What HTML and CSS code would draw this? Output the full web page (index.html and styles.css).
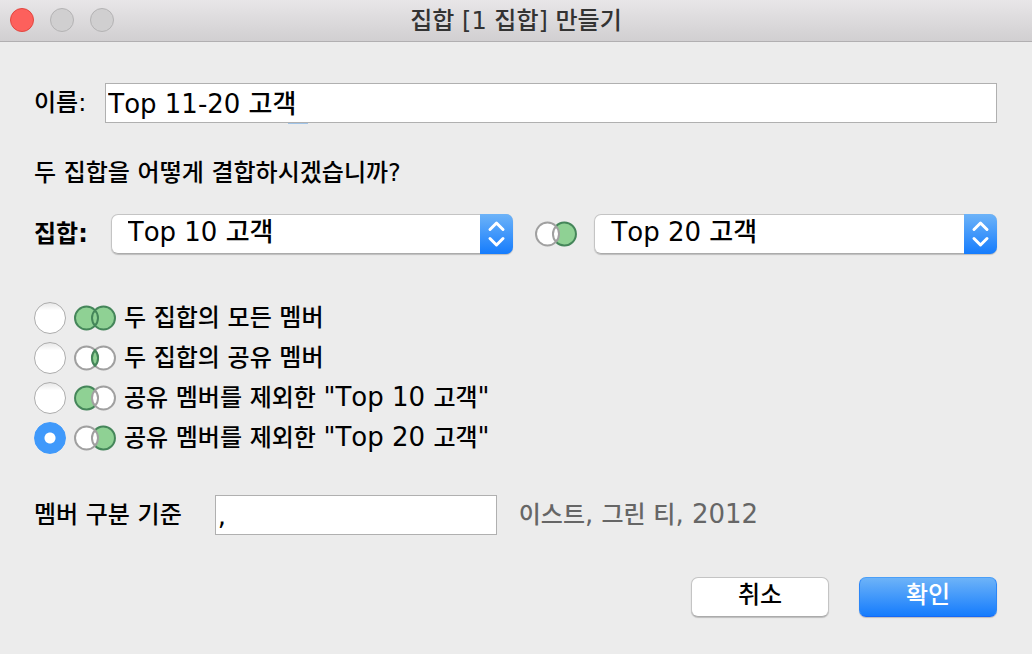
FILE: index.html
```html
<!DOCTYPE html>
<html lang="ko">
<head>
<meta charset="utf-8">
<title>집합 만들기</title>
<link rel="stylesheet" href="styles.css">
</head>
<body>
<svg class="defs" aria-hidden="true">
  <defs>
    <symbol id="venn-all" viewBox="0 0 42 26">
      <circle class="fill-on" cx="12.5" cy="13" r="11.5"/>
      <circle class="fill-on" cx="29.5" cy="13" r="11.5"/>
      <circle class="line-on" cx="12.5" cy="13" r="11.5"/>
      <circle class="line-on" cx="29.5" cy="13" r="11.5"/>
    </symbol>
    <symbol id="venn-shared" viewBox="0 0 42 26">
      <circle class="fill-off" cx="12.5" cy="13" r="11.5"/>
      <circle class="fill-off" cx="29.5" cy="13" r="11.5"/>
      <circle class="line-off" cx="12.5" cy="13" r="11.5"/>
      <circle class="line-off" cx="29.5" cy="13" r="11.5"/>
      <path class="fill-on line-lens" d="M21 5.2A11.5 11.5 0 0 1 21 20.8A11.5 11.5 0 0 1 21 5.2Z"/>
    </symbol>
    <symbol id="venn-left" viewBox="0 0 42 26">
      <circle class="fill-off" cx="29.5" cy="13" r="11.5"/>
      <path class="fill-on" d="M21 5.2A11.5 11.5 0 1 0 21 20.8A11.5 11.5 0 0 1 21 5.2Z"/>
      <path class="line-on" d="M21 5.2A11.5 11.5 0 1 0 21 20.8"/>
      <circle class="line-off" cx="29.5" cy="13" r="11.5"/>
      <path class="line-off" d="M21 5.2A11.5 11.5 0 0 1 21 20.8"/>
    </symbol>
    <symbol id="venn-right" viewBox="0 0 42 26">
      <circle class="fill-off" cx="12.5" cy="13" r="11.5"/>
      <path class="fill-on" d="M21 5.2A11.5 11.5 0 1 1 21 20.8A11.5 11.5 0 0 0 21 5.2Z"/>
      <path class="line-on" d="M21 5.2A11.5 11.5 0 1 1 21 20.8"/>
      <circle class="line-off" cx="12.5" cy="13" r="11.5"/>
      <path class="line-off" d="M21 5.2A11.5 11.5 0 0 0 21 20.8"/>
    </symbol>
    <symbol id="stepper" viewBox="0 0 33 40">
      <path class="chevron" d="M10 15.5L16.5 9L23 15.5M10 24.5L16.5 31L23 24.5"/>
    </symbol>
  </defs>
</svg>

<header class="titlebar">
  <div class="lights">
    <button class="light light-close" type="button" aria-label="닫기"></button>
    <button class="light" type="button" aria-label="최소화" disabled></button>
    <button class="light" type="button" aria-label="확대" disabled></button>
  </div>
  <h1 class="title">집합 [1 집합] 만들기</h1>
</header>

<form class="dialog">
  <div class="row name-row">
    <label for="name">이름:</label>
    <div class="name-box"><input class="field" id="name" type="text" value="Top 11-20 고객"></div>
  </div>

  <p class="question">두 집합을 어떻게 결합하시겠습니까?</p>

  <div class="row sets-row">
    <label class="strong" for="left-set">집합:</label>
    <div class="popup">
      <select id="left-set"><option>Top 10 고객</option><option>Top 20 고객</option></select>
      <svg class="popup-arrows" aria-hidden="true"><use href="#stepper"/></svg>
    </div>
    <svg class="venn" aria-hidden="true"><use href="#venn-right"/></svg>
    <div class="popup">
      <select aria-label="두 번째 집합"><option>Top 20 고객</option><option>Top 10 고객</option></select>
      <svg class="popup-arrows" aria-hidden="true"><use href="#stepper"/></svg>
    </div>
  </div>

  <div class="choices" role="radiogroup">
    <label class="choice"><input type="radio" name="mode"><svg class="venn" aria-hidden="true"><use href="#venn-all"/></svg><span>두 집합의 모든 멤버</span></label>
    <label class="choice"><input type="radio" name="mode"><svg class="venn" aria-hidden="true"><use href="#venn-shared"/></svg><span>두 집합의 공유 멤버</span></label>
    <label class="choice"><input type="radio" name="mode"><svg class="venn" aria-hidden="true"><use href="#venn-left"/></svg><span>공유 멤버를 제외한 <span class="latin">"Top 10 </span>고객<span class="latin">"</span></span></label>
    <label class="choice"><input type="radio" name="mode" checked><svg class="venn" aria-hidden="true"><use href="#venn-right"/></svg><span>공유 멤버를 제외한 <span class="latin">"Top 20 </span>고객<span class="latin">"</span></span></label>
  </div>

  <div class="row separator-row">
    <label for="separator">멤버 구분 기준</label>
    <input class="field separator" id="separator" type="text" value=",">
    <span class="sample">이스트<span class="latin">, </span>그린 티<span class="latin">, 2012</span></span>
  </div>

  <div class="actions">
    <button class="button" type="button">취소</button>
    <button class="button primary" type="submit">확인</button>
  </div>
</form>
</body>
</html>
```

FILE: styles.css
```css
* {
  box-sizing: border-box;
}

body {
  margin: 0;
  background: #ececec;
  color: #000;
  font: 500 24px/40px "DejaVu Sans", "Noto Sans CJK KR", sans-serif;
  font-kerning: none;
}

input,
select,
button {
  margin: 0;
  font: inherit;
  font-kerning: none;
  color: inherit;
}

.defs {
  position: absolute;
  width: 0;
  height: 0;
}

.titlebar {
  display: grid;
  grid-template-columns: 1fr auto 1fr;
  align-items: center;
  height: 42px;
  padding: 0 10px 1px;
  background: linear-gradient(#e8e6e8, #d1cfd1);
  border-bottom: 1px solid #b1afb1;
}

.lights {
  display: flex;
  gap: 16px;
}

.light {
  width: 24px;
  height: 24px;
  padding: 0;
  border: 1px solid #b4b3b4;
  border-radius: 50%;
  background: #d0cfd0;
}

.light-close {
  border-color: #e2463f;
  background: #fd605c;
}

.title {
  margin: 0;
  padding-top: 2px;
  color: #333;
  font-size: 24px;
  font-weight: 500;
  line-height: 38px;
}

.dialog {
  padding: 41px 35px 36px 34px;
}

.row {
  display: flex;
  align-items: center;
}

.name-row {
  gap: 19px;
}

.name-box {
  position: relative;
  flex: 1;
  display: flex;
}

.name-box::after {
  content: "";
  position: absolute;
  top: 100%;
  left: 183px;
  width: 20px;
  height: 1px;
  background: #a0c4e8;
}

.field {
  width: 100%;
  height: 40px;
  padding: 2px 2px 0;
  border: 1px solid #b0b0b0;
  border-radius: 0;
  outline: 0;
  background: #fff;
  font-size: 26px;
}

.question {
  margin: 30px 0 21px;
}

.sets-row {
  gap: 17px;
}

.sets-row label {
  margin-right: 6px;
}

.sets-row .venn {
  margin-left: 5px;
}

.strong {
  font-weight: 700;
}

.popup {
  position: relative;
  flex: 1;
  border-radius: 7px;
  box-shadow: 0 1px 1px #0003;
}

.popup select {
  display: block;
  width: 100%;
  height: 40px;
  padding: 0 40px 4px 16px;
  border: 1px solid #c4c4c4;
  border-bottom-color: #ababab;
  border-radius: 7px;
  appearance: none;
  background: #fff;
  font-size: 26px;
  line-height: 34px;
}

.popup-arrows {
  position: absolute;
  top: 0;
  right: 0;
  width: 33px;
  height: 40px;
  border-radius: 0 7px 7px 0;
  background: linear-gradient(#6db3f8, #157cfd);
  pointer-events: none;
}

.chevron {
  fill: none;
  stroke: #fff;
  stroke-width: 3;
  stroke-linecap: round;
  stroke-linejoin: round;
}

.venn {
  flex: none;
  width: 42px;
  height: 26px;
}

.fill-on {
  fill: #8fd194;
}

.fill-off {
  fill: #fff;
}

.line-on,
.line-off {
  fill: none;
  stroke-width: 2;
}

.line-on,
.line-lens {
  stroke: #45865a;
}

.line-lens {
  stroke-width: 2;
}

.line-off {
  stroke: #a0a0a0;
}

.choices {
  display: flex;
  flex-direction: column;
  margin-top: 44px;
}

.choice {
  display: flex;
  align-items: center;
  gap: 8px;
  height: 40px;
}

.choice input {
  width: 32px;
  height: 32px;
  border: 1px solid #acacac;
  border-radius: 50%;
  appearance: none;
  background: #fff linear-gradient(#e8e8e8, #fff 25%);
}

.choice input:checked {
  border-color: #3f99fb;
  background: radial-gradient(circle, #fff 5px, #3f99fb 6px);
}

.latin {
  font-size: 26px;
  line-height: 1;
}

.separator-row {
  margin-top: 37px;
}

.separator-row label {
  margin-right: 33px;
}

.separator {
  width: 282px;
}

.sample {
  margin-left: 22px;
  color: #666;
}

.actions {
  display: flex;
  justify-content: flex-end;
  gap: 30px;
  margin-top: 42px;
}

.button {
  width: 138px;
  height: 40px;
  padding: 0 0 4px;
  border: 1px solid #c4c4c4;
  border-bottom-color: #ababab;
  border-radius: 7px;
  background: #fff;
  box-shadow: 0 1px 1px #0003;
  line-height: 34px;
}

.primary {
  border-color: #4a9ff8 #2b86f8 #1768f5;
  background: linear-gradient(#6db3f8, #157cfd);
  color: #fff;
}
```
